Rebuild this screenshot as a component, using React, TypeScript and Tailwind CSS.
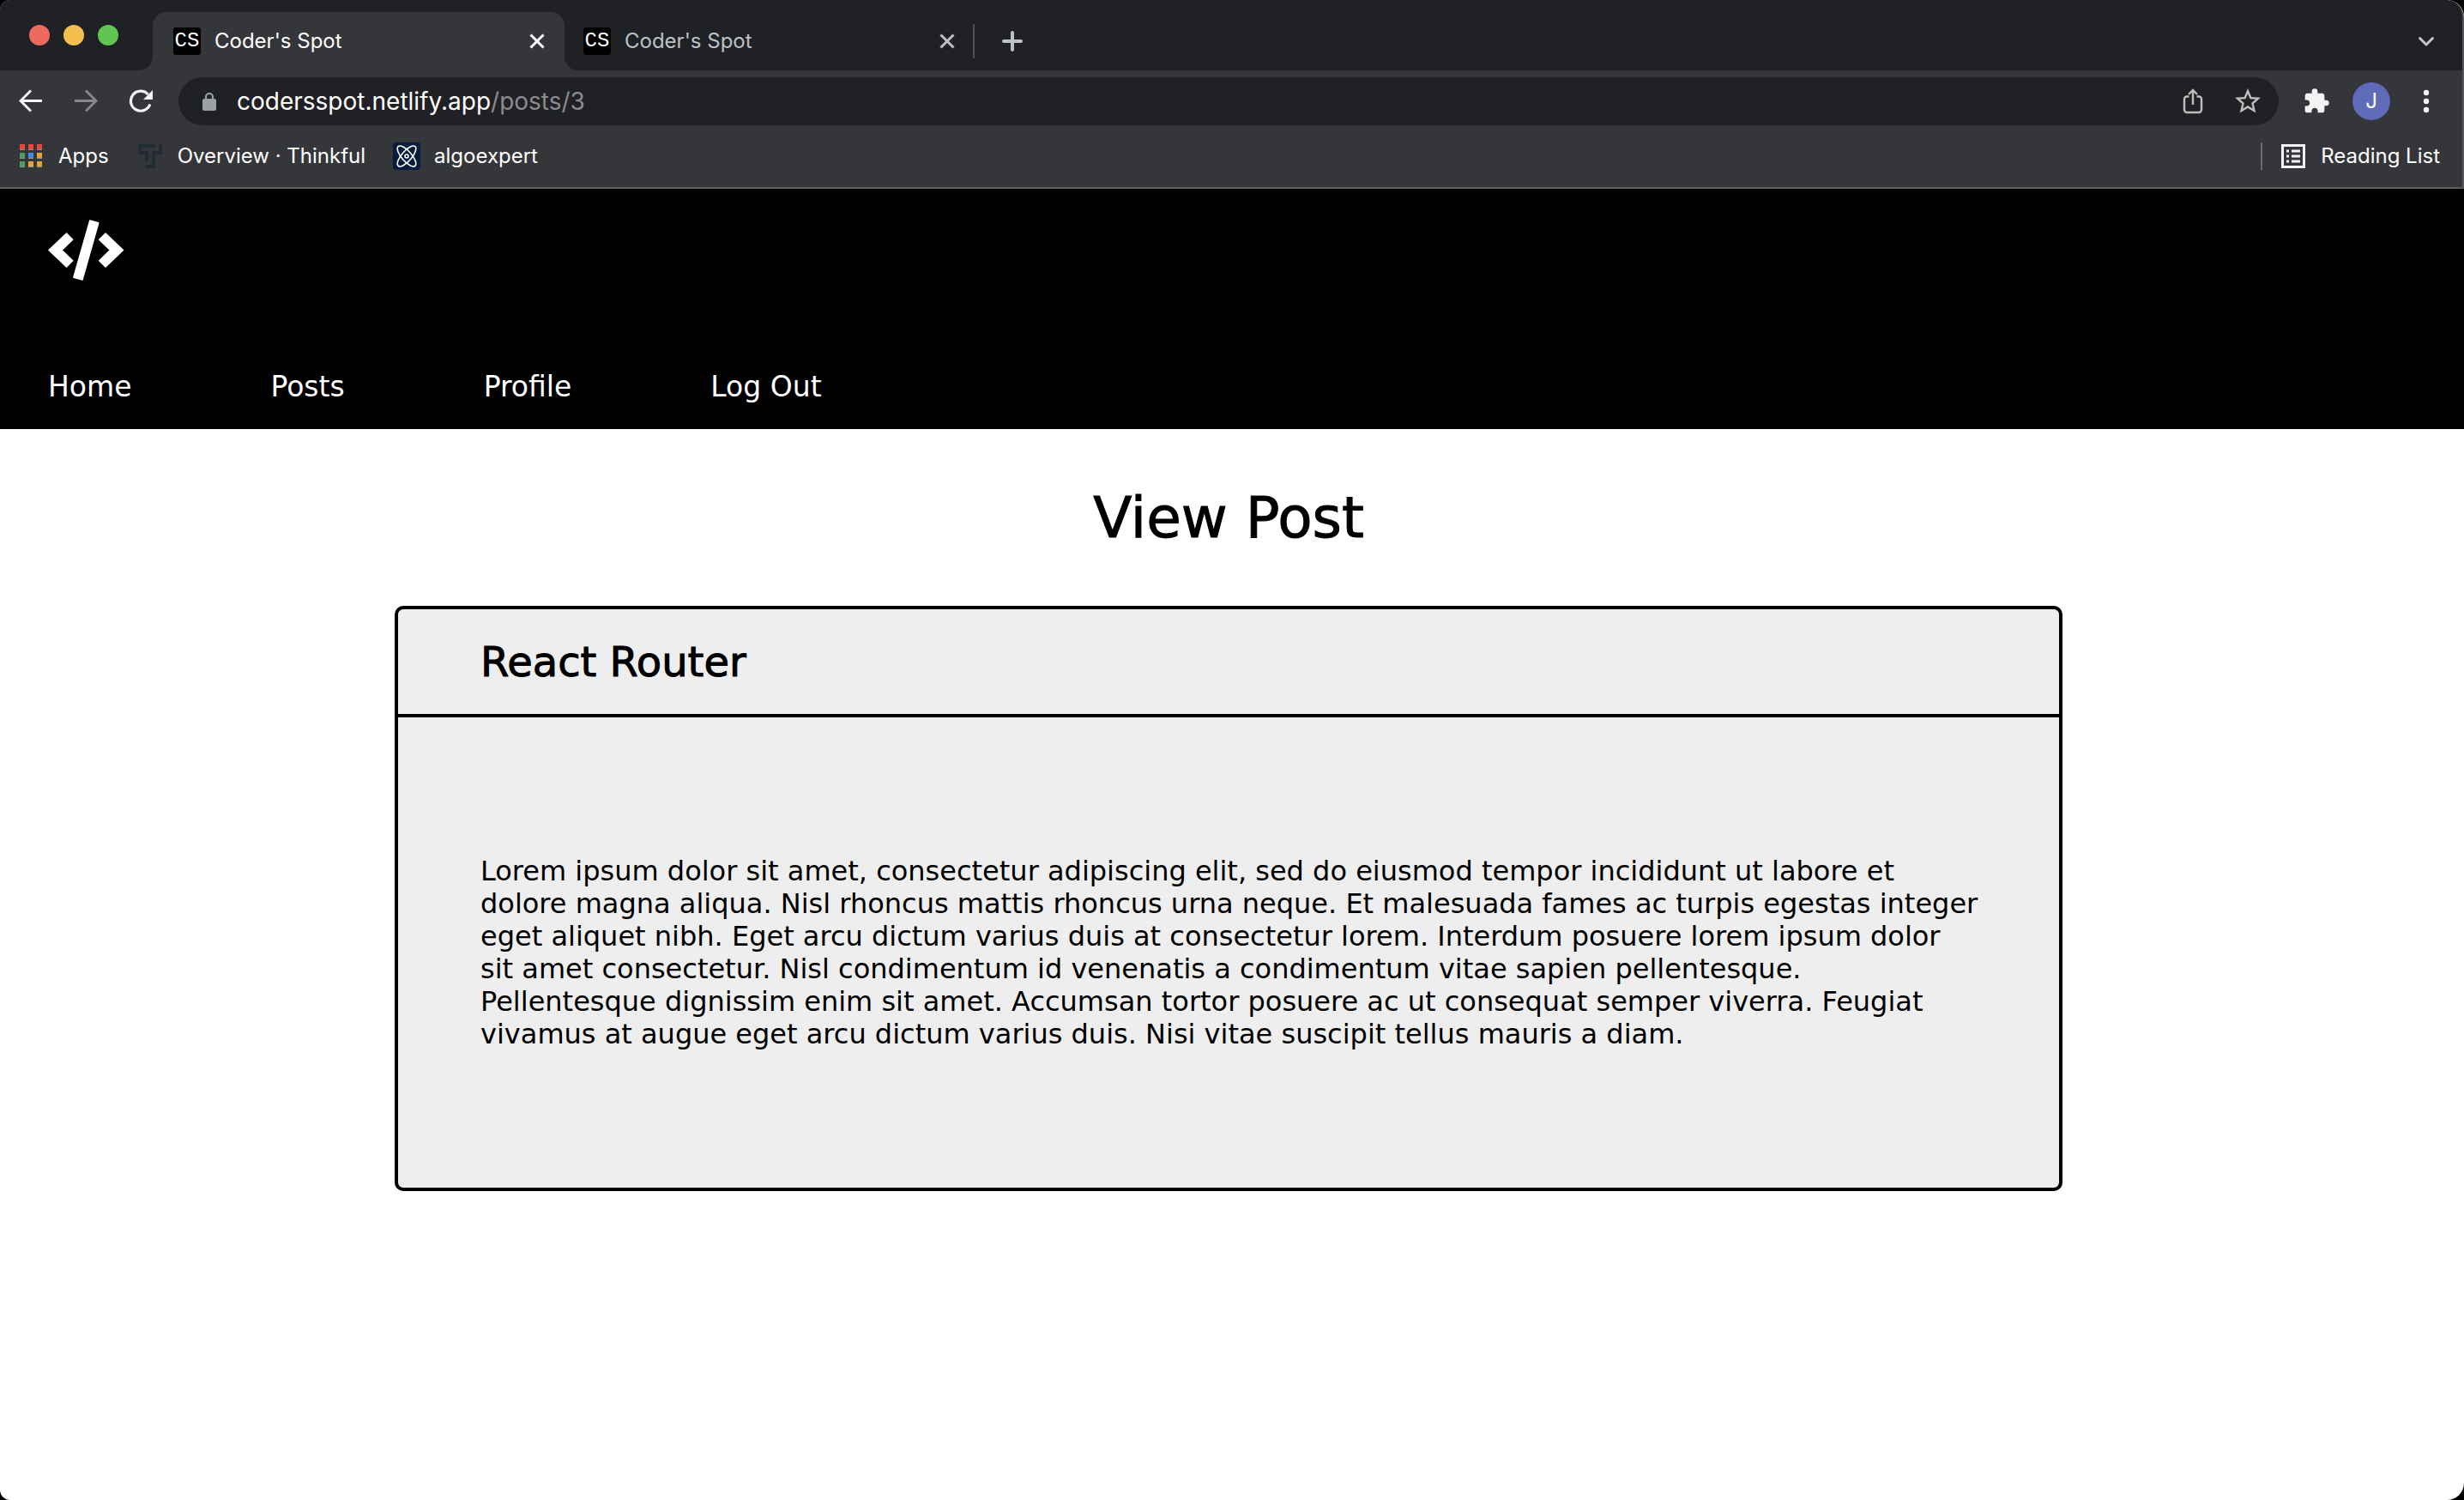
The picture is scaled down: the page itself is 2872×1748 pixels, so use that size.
import React from "react";
import { MdExtension, MdStarBorder } from "react-icons/md";

const BODY = `Lorem ipsum dolor sit amet, consectetur adipiscing elit, sed do eiusmod tempor incididunt ut labore et
dolore magna aliqua. Nisl rhoncus mattis rhoncus urna neque. Et malesuada fames ac turpis egestas integer
eget aliquet nibh. Eget arcu dictum varius duis at consectetur lorem. Interdum posuere lorem ipsum dolor
sit amet consectetur. Nisl condimentum id venenatis a condimentum vitae sapien pellentesque.
Pellentesque dignissim enim sit amet. Accumsan tortor posuere ac ut consequat semper viverra. Feugiat
vivamus at augue eget arcu dictum varius duis. Nisi vitae suscipit tellus mauris a diam.`;

function Favicon() {
  return (
    <span className="flex size-8 shrink-0 items-center justify-center rounded-[3px] bg-black font-['Liberation_Mono',monospace] text-[24px] leading-8 text-white">
      CS
    </span>
  );
}

function CloseIcon() {
  return (
    <svg className="size-5" viewBox="0 0 20 20" fill="none" stroke="currentColor" strokeWidth="3">
      <path d="M2.5 2.5l15 15M17.5 2.5l-15 15" />
    </svg>
  );
}

function Flare({ side }: { side: "left" | "right" }) {
  return (
    <svg className="size-4 shrink-0 self-end" viewBox="0 0 16 16" fill="#35363a">
      <path d={side === "left" ? "M16 0v16H0A16 16 0 0 0 16 0z" : "M0 0v16h16A16 16 0 0 1 0 0z"} />
    </svg>
  );
}

function TabStrip() {
  return (
    <div className="flex h-[82px] items-stretch bg-[#202124]">
      <div className="flex w-[162px] shrink-0 items-start gap-4 pl-[34px] pt-[29px]">
        <button aria-label="Close window" className="size-6 rounded-full bg-[#ed6a5e]" />
        <button aria-label="Minimize window" className="size-6 rounded-full bg-[#f5bf4f]" />
        <button aria-label="Zoom window" className="size-6 rounded-full bg-[#61c554]" />
      </div>
      <Flare side="left" />
      <div className="mt-[14px] flex w-[480px] items-center rounded-t-2xl bg-[#35363a] pl-6 pr-[22px] text-white">
        <div className="flex flex-1 items-center gap-4">
          <Favicon />
          <span className="text-[24px] leading-8">Coder's Spot</span>
        </div>
        <button aria-label="Close tab">
          <CloseIcon />
        </button>
      </div>
      <Flare side="right" />
      <div className="mt-[14px] flex w-[460px] items-center pl-[6px] pr-5 text-[#bdc1c6]">
        <div className="flex flex-1 items-center gap-4">
          <Favicon />
          <span className="text-[24px] leading-8">Coder's Spot</span>
        </div>
        <button aria-label="Close tab">
          <CloseIcon />
        </button>
      </div>
      <div className="mt-[14px] flex flex-1 items-center">
        <div className="h-10 w-[2px] bg-[#505154]" />
        <button aria-label="New tab" className="ml-8 text-[#bdc1c6]">
          <svg className="size-6" viewBox="0 0 24 24" stroke="currentColor" strokeWidth="4" strokeLinecap="round">
            <path d="M2 12h20M12 2v20" />
          </svg>
        </button>
      </div>
      <button aria-label="Search tabs" className="mt-[14px] mr-[30px] text-[#c4c5c8]">
        <svg className="size-6" viewBox="0 0 24 24" fill="none" stroke="currentColor" strokeWidth="3" strokeLinecap="round" strokeLinejoin="round">
          <path d="M4.500 8.500l7.500 7.500 7.500-7.500" />
        </svg>
      </button>
    </div>
  );
}

function Toolbar() {
  return (
    <div className="flex h-[72px] items-center pl-[22px] pr-9">
      <div className="flex gap-9">
        <button aria-label="Back" className="text-[#f1f3f4]">
          <svg className="size-7" viewBox="0 0 28 28" fill="none" stroke="currentColor" strokeWidth="3">
            <path d="M27 13.500H3M14 1.500l-12 12 12 12" />
          </svg>
        </button>
        <button aria-label="Forward" className="text-[#86878a]">
          <svg className="size-7" viewBox="0 0 28 28" fill="none" stroke="currentColor" strokeWidth="3">
            <path d="M1 13.500h24M14 1.500l12 12-12 12" />
          </svg>
        </button>
        <button aria-label="Reload" className="text-[#f1f3f4]">
          <svg className="size-7" viewBox="0 0 28 28" fill="none" stroke="currentColor" strokeWidth="3.200">
            <path d="M24.800 17.500A11.500 11.500 0 1 1 22.500 6" />
            <path d="M28 1v11H17z" fill="currentColor" stroke="none" />
          </svg>
        </button>
      </div>
      <div className="ml-[30px] flex h-14 flex-1 items-center rounded-full bg-[#202124] pl-[26px] pr-[18px]">
        <svg className="h-6 w-5" viewBox="0 0 20 24" fill="none">
          <rect x="2" y="9" width="16" height="14" rx="2" fill="#9aa0a6" />
          <path d="M6 10V7a4 4 0 0 1 8 0v3" stroke="#9aa0a6" strokeWidth="2.200" />
        </svg>
        <div role="textbox" aria-label="Address" className="ml-[22px] flex-1 text-[28px] leading-9 text-white">
          codersspot.netlify.app<span className="text-[#8b8c8f]">/posts/3</span>
        </div>
        <div className="flex items-center gap-8 text-[#bdbdbd]">
          <button aria-label="Share this page">
            <svg className="h-8 w-7" viewBox="0 0 28 32" fill="none" stroke="currentColor" strokeWidth="2.400">
              <path d="M9.500 10.500H7a3 3 0 0 0-3 3V26a3 3 0 0 0 3 3h14a3 3 0 0 0 3-3V13.500a3 3 0 0 0-3-3h-2.500M14 20V3M9 8l5-5 5 5" />
            </svg>
          </button>
          <button aria-label="Bookmark this page">
            <MdStarBorder className="size-9" />
          </button>
        </div>
      </div>
      <button aria-label="Extensions" className="ml-7 text-[#f1f3f4]">
        <MdExtension className="size-8" />
      </button>
      <button aria-label="Profile J" className="ml-[26px] flex size-11 items-center justify-center rounded-full bg-[#5f6ab9] text-[24px] text-white">
        J
      </button>
      <button aria-label="Menu" className="ml-9 text-[#f1f3f4]">
        <svg className="h-7 w-3" viewBox="0 0 12 28" fill="currentColor">
          <circle cx="6" cy="4" r="3.200" />
          <circle cx="6" cy="14" r="3.200" />
          <circle cx="6" cy="24" r="3.200" />
        </svg>
      </button>
    </div>
  );
}

const DOTS = ["#e8483c", "#e8483c", "#e8483c", "#4f9d5c", "#4688f1", "#e5a535", "#4f9d5c", "#e5a535", "#e5a535"];

function Bookmarks() {
  return (
    <div className="flex h-[66px] items-center border-b-2 border-[#5f6063] pb-2 pl-5 pr-[26px] text-[24px] leading-8 text-white">
      <nav aria-label="Bookmarks" className="flex flex-1 gap-8">
        <a href="#apps" className="flex items-center gap-4">
          <svg className="size-8" viewBox="0 0 32 32">
            {DOTS.map((c, i) => (
              <g key={i}>
                <rect x={3 + (i % 3) * 10} y={2 + Math.floor(i / 3) * 10} width="6" height="7" fill="#8f9194" />
                <rect x={3 + (i % 3) * 10} y={2 + Math.floor(i / 3) * 10} width="6" height="6" fill={c} />
              </g>
            ))}
          </svg>
          Apps
        </a>
        <a href="#thinkful" className="flex items-center gap-4">
          <svg className="size-8" viewBox="0 0 32 32" fill="#212b33">
            <path d="M2 2h20v4H6v4h8v12h-4v-8H2z" />
            <path d="M26 2h4v12h-8v16H10v-4h8V10h8z" />
          </svg>
          Overview · Thinkful
        </a>
        <a href="#algoexpert" className="flex items-center gap-4">
          <svg className="size-8" viewBox="0 0 32 32" fill="none" stroke="#fff" strokeWidth="1.600">
            <rect width="32" height="32" rx="4" fill="#071d3d" stroke="none" />
            <ellipse cx="16" cy="16" rx="15" ry="5.800" transform="rotate(49 16 16)" />
            <ellipse cx="16" cy="16" rx="15" ry="5.800" transform="rotate(-49 16 16)" />
            <circle cx="16" cy="16" r="2" />
          </svg>
          algoexpert
        </a>
      </nav>
      <div className="mr-5 h-8 w-[2px] bg-[#6a6b6e]" />
      <button className="flex items-center gap-4">
        <svg className="size-8" viewBox="0 0 32 32" fill="none" stroke="#f1f3f4" strokeWidth="3">
          <rect x="3.500" y="3.500" width="25" height="25" />
          <path d="M8 10h3M8 16h3M8 22h3M14 10h10M14 16h10M14 22h10" strokeWidth="2.800" />
        </svg>
        Reading List
      </button>
    </div>
  );
}

export default function App() {
  return (
    <div className="min-h-screen bg-black font-[Inter,sans-serif]">
      <div className="flex min-h-screen flex-col overflow-hidden rounded-l-[12px] rounded-r-[20px] bg-white">
        <header className="overflow-hidden rounded-tr-[20px] border-r-2 border-[#56575a] bg-[#35363a]">
          <TabStrip />
          <Toolbar />
          <Bookmarks />
        </header>
        <div className="flex-1 font-['DejaVu_Sans',sans-serif] text-[32px] leading-[38px] text-black">
          <div className="bg-black px-14 pb-[30px] pt-9 text-white">
            <a href="#home" aria-label="Coder's Spot" className="block w-[90px]">
              <svg className="h-[72px] w-[90px]" viewBox="16 16 90 72" fill="#fff" stroke="#fff" strokeWidth="1.500" strokeLinejoin="round">
                <path d="M17 51.500L37.500 32l7.200 7.300L32 51.500l12.700 12.200L37.500 71z" />
                <path d="M103.500 51.500L83 32l-7.300 7.300L88.400 51.500 75.700 63.700 83 71z" />
                <path d="M64.800 17l10 2.800L56 86l-10.200-2.800z" />
              </svg>
            </a>
            <nav aria-label="Main" className="mt-[104px] flex gap-[162px] text-[33px]">
              <a href="#home">Home</a>
              <a href="#posts">Posts</a>
              <a href="#profile">Profile</a>
              <a href="#logout">Log Out</a>
            </nav>
          </div>
          <main className="pl-[460px] pr-[468px] pt-16">
            <h1 className="text-center text-[66px] leading-[80px] [-webkit-text-stroke:1px_black]">View Post</h1>
            <article className="mt-[62px] rounded-[10px] border-4 border-black bg-[#eeeeee]">
              <div className="flex h-[126px] items-center border-b-4 border-black px-24">
                <h2 className="text-[48px] leading-[60px] [-webkit-text-stroke:1px_black]">React Router</h2>
              </div>
              <p className="whitespace-pre-line py-40 pl-24 pr-16">{BODY}</p>
            </article>
          </main>
        </div>
      </div>
    </div>
  );
}
